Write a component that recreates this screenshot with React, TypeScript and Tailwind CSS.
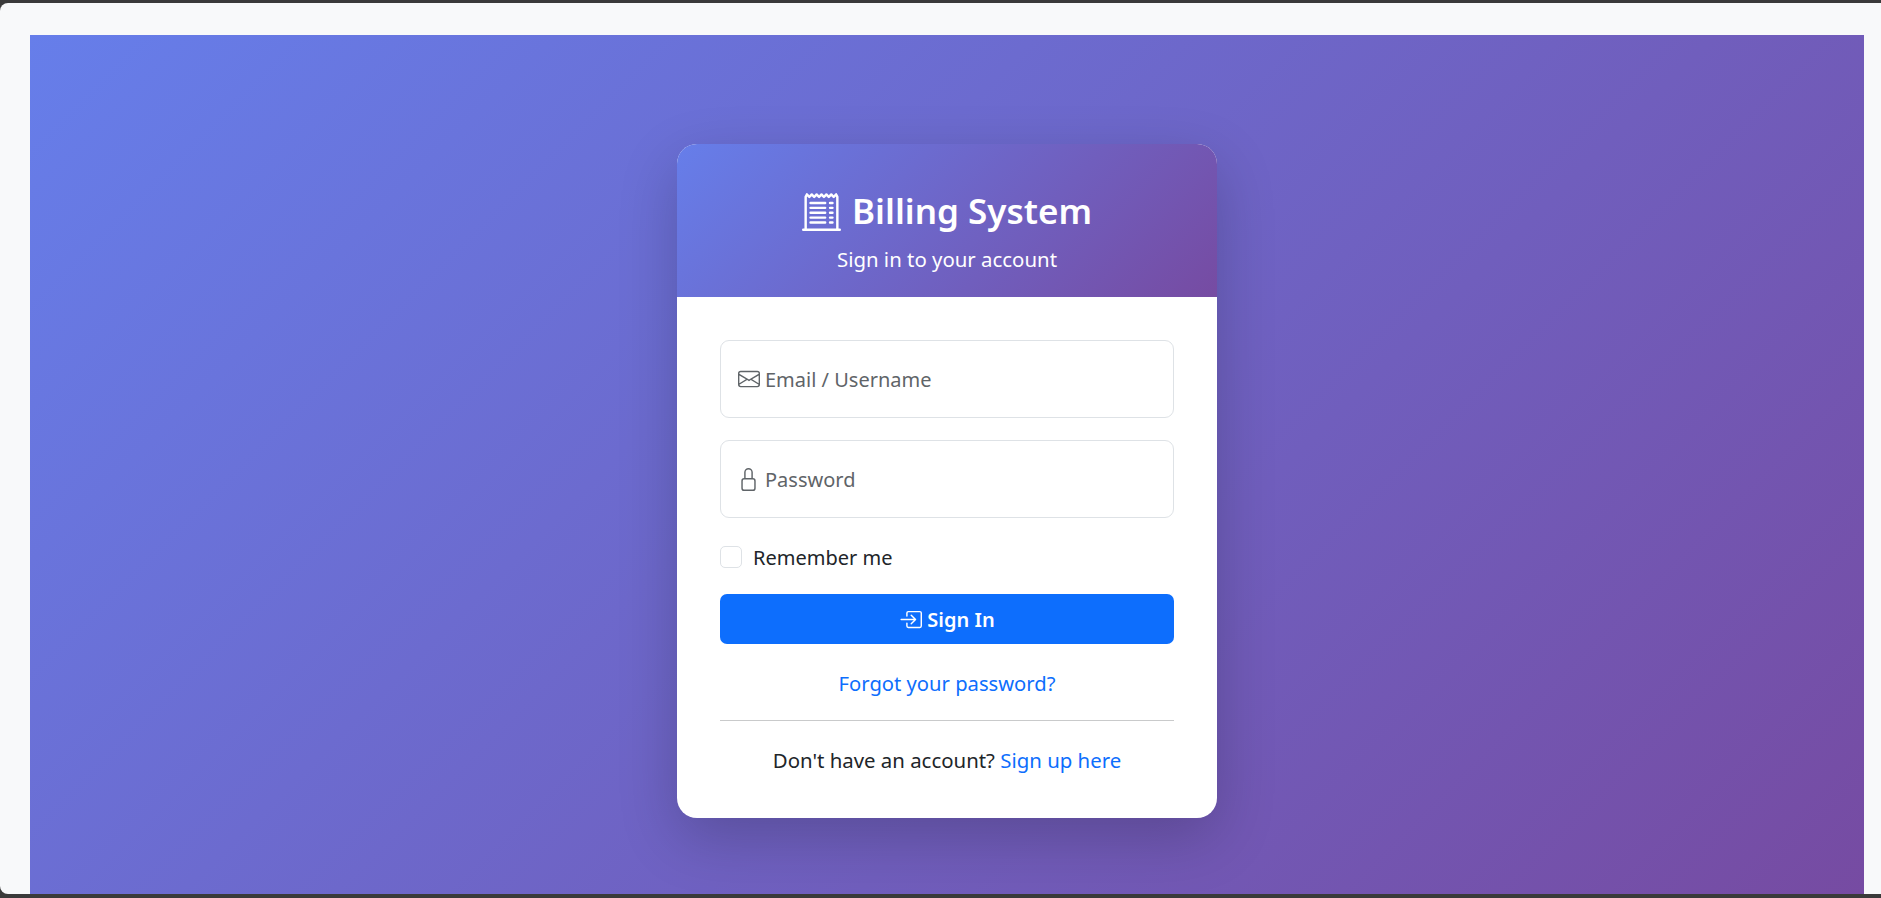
import { BsBoxArrowInRight, BsEnvelope, BsLock, BsReceiptCutoff } from "react-icons/bs";

// Campo del formulario con icono y texto de ayuda
function Field({ icon, label, type }: { icon: React.ReactNode; label: string; type: string }) {
  return (
    <div className="relative h-[78px] rounded-[9px] border border-[#dee2e6] bg-white">
      <input
        type={type}
        aria-label={label}
        className="h-full w-full rounded-[9px] bg-transparent outline-none"
      />
      <div className="pointer-events-none absolute inset-0 flex items-center pl-[16px] text-[#5f6468]">
        <span className="flex w-[23px] justify-center">{icon}</span>
        <span className="mt-[1px] ml-[5px]">{label}</span>
      </div>
    </div>
  );
}

export default function App() {
  return (
    <div
      className="flex h-[898px] flex-col overflow-hidden bg-[#3a3a3a] pt-[3px] pb-[4px] text-[20px] text-[#212529]"
      style={{ fontFamily: '"Noto Sans", sans-serif' }}
    >
      <div className="flex min-h-0 flex-1 flex-col rounded-l-[8px] bg-[#f8f9fa] pt-[32px] pr-[17px] pl-[30px]">
        <main className="flex flex-1 items-start justify-center bg-[linear-gradient(135deg,#667eea,#764ba2)] pt-[109px]">
          <div className="w-[540px] overflow-hidden rounded-[20px] bg-white shadow-[0_20px_60px_rgba(0,0,0,0.2)]">
            <header className="flex h-[153px] flex-col items-center bg-[linear-gradient(135deg,#667eea,#764ba2)] pt-[44px] text-white">
              <h1 className="flex items-center text-[35px] leading-[46px] font-semibold">
                <BsReceiptCutoff className="mr-[11px] h-[39px] w-[39px]" />
                Billing System
              </h1>
              <p className="mt-[11px] text-[20.4px] leading-[29px]">Sign in to your account</p>
            </header>

            <form className="flex h-[521px] flex-col px-[43px] pt-[43px]">
              <Field icon={<BsEnvelope className="h-[22px] w-[22px]" />} label="Email / Username" type="text" />
              <div className="mt-[22px]">
                <Field icon={<BsLock className="h-[23px] w-[23px]" />} label="Password" type="password" />
              </div>

              <label className="mt-[25px] flex h-[29px] items-center">
                <input
                  type="checkbox"
                  className="mt-[-1px] h-[22px] w-[22px] appearance-none rounded-[5px] border border-[#dee2e6] bg-white"
                />
                <span className="ml-[11px]">Remember me</span>
              </label>

              <button
                type="button"
                className="mt-[22px] flex h-[50px] items-center justify-center rounded-[7px] bg-[#0d6efd] font-semibold text-white"
              >
                <BsBoxArrowInRight className="mr-[5px] h-[23px] w-[23px]" />
                <span className="mt-[2px]">Sign In</span>
              </button>

              <a href="#" className="mt-[25px] text-center text-[20.2px] leading-[29px] text-[#0d6efd]">
                Forgot your password?
              </a>

              <hr className="mt-[22px] border-t border-[#c9cacb]" />

              <p className="mt-[25px] text-center text-[20.4px] leading-[29px]">
                Don't have an account? <a href="#" className="text-[#0d6efd]">Sign up here</a>
              </p>
            </form>
          </div>
        </main>
      </div>
    </div>
  );
}
